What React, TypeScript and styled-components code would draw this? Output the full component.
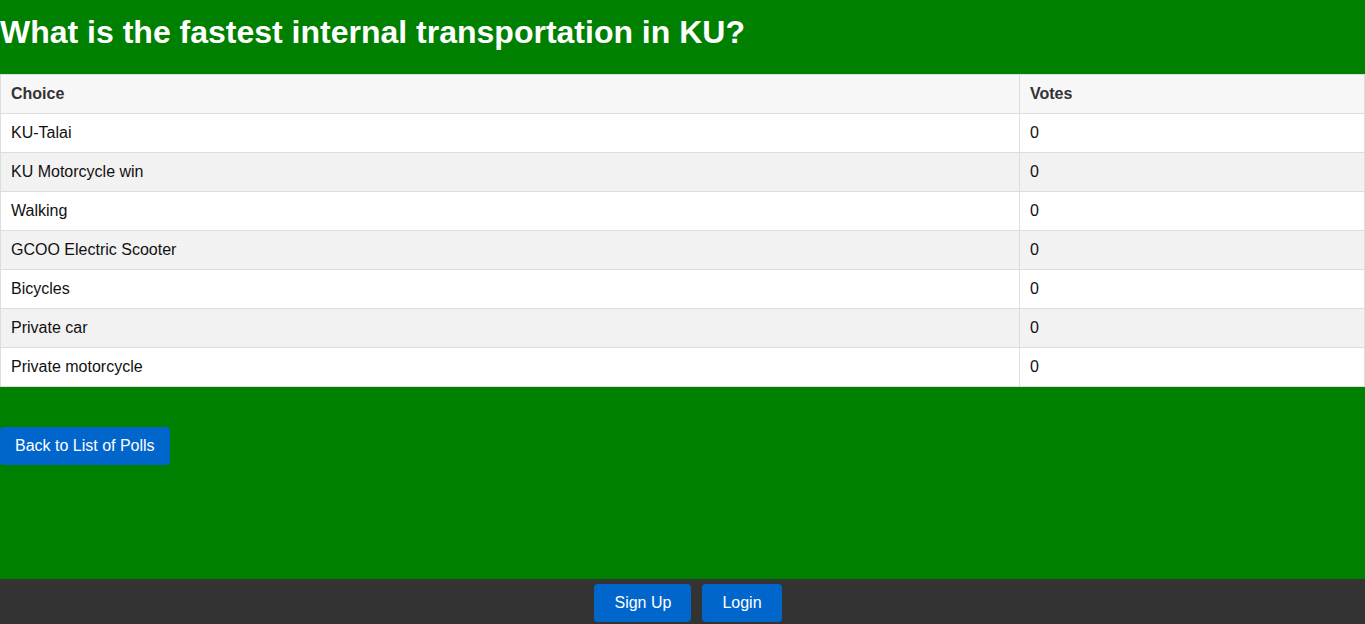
import React from "react";
import styled, { createGlobalStyle } from "styled-components";

const Global = createGlobalStyle`
  html, body { margin: 0; padding: 0; }
  body {
    background: #008000;
    font-family: "Liberation Sans", Arial, sans-serif;
    min-height: 624px;
  }
`;

const Page = styled.div`
  min-height: 624px;
  display: flex;
  flex-direction: column;
`;

const Main = styled.main`
  flex: 1;
`;

const Title = styled.h1`
  margin: 14px 0 23px;
  font-size: 32px;
  font-weight: bold;
  color: #ffffff;
  line-height: 37px;
`;

const Table = styled.table`
  width: 100%;
  border-collapse: collapse;
  background: #ffffff;
  font-size: 16px;
`;

const Th = styled.th`
  text-align: left;
  padding: 10px;
  border: 1px solid #dddddd;
  background: #f7f7f7;
  color: #333333;
  font-weight: bold;
  line-height: 18px;
`;

const Row = styled.tr<{ $alt: boolean }>`
  background: ${(p) => (p.$alt ? "#f2f2f2" : "#ffffff")};
`;

const Td = styled.td`
  padding: 10px;
  border: 1px solid #dddddd;
  color: #111111;
  line-height: 18px;
`;

const BackWrap = styled.div`
  margin-top: 40px;
`;

const Button = styled.button<{ $px?: number }>`
  font-family: "Liberation Sans", Arial, sans-serif;
  font-size: 16px;
  line-height: 18px;
  color: #ffffff;
  background: #0066cc;
  border: none;
  border-radius: 4px;
  padding: 10px ${(p) => p.$px ?? 15}px;
  cursor: pointer;
`;

const Footer = styled.footer`
  height: 45px;
  box-sizing: border-box;
  background: #333333;
  display: flex;
  justify-content: center;
  align-items: flex-start;
  padding: 5px 0 0 11px;
  gap: 11px;
`;

const choices = [
  "KU-Talai",
  "KU Motorcycle win",
  "Walking",
  "GCOO Electric Scooter",
  "Bicycles",
  "Private car",
  "Private motorcycle",
];

export default function App() {
  return (
    <Page>
      <Global />
      <Main>
        <Title>What is the fastest internal transportation in KU?</Title>
        <Table>
          <colgroup>
            <col style={{ width: 1019 }} />
            <col />
          </colgroup>
          <thead>
            <tr>
              <Th>Choice</Th>
              <Th>Votes</Th>
            </tr>
          </thead>
          <tbody>
            {choices.map((c, i) => (
              <Row key={c} $alt={i % 2 === 1}>
                <Td>{c}</Td>
                <Td>0</Td>
              </Row>
            ))}
          </tbody>
        </Table>
        <BackWrap>
          <Button>Back to List of Polls</Button>
        </BackWrap>
      </Main>
      <Footer>
        <Button $px={20}>Sign Up</Button>
        <Button $px={20}>Login</Button>
      </Footer>
    </Page>
  );
}
